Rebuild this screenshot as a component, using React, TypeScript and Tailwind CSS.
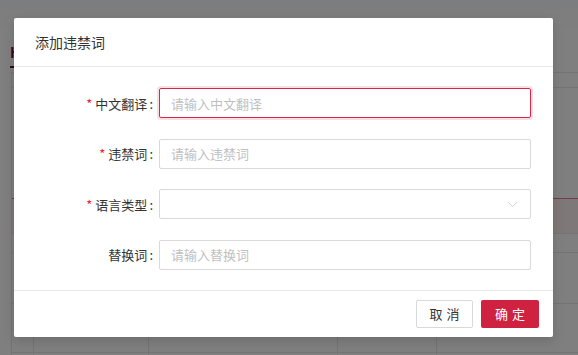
import { ChevronDown } from 'lucide-react'

const font = { fontFamily: '"Noto Sans CJK SC", "Noto Sans", sans-serif' }

const rows = [
  { label: '中文翻译', required: true, placeholder: '请输入中文翻译', focused: true },
  { label: '违禁词', required: true, placeholder: '请输入违禁词' },
  { label: '语言类型', required: true, select: true },
  { label: '替换词', required: false, placeholder: '请输入替换词' },
]

// rows of the table behind the mask
const tableRows = [
  { h: 'h-[15px]' },
  { h: 'h-[111px]' },
  { h: 'h-[35px]', active: true },
  { h: 'h-[19px]' },
  { h: 'h-[51px]' },
  { h: 'h-[49px]' },
  { h: 'h-[20px]' },
]

const App = () => {
  return (
    <div className="relative w-[578px] h-[355px] overflow-hidden bg-white" style={font}>
      {/* page behind the mask */}
      <div className="flex flex-col">
        <div className="h-[9px] bg-[#f8fbfd]" />
        <div className="h-[18px] bg-[#fdfdfd]" />
        <div className="pl-[10px] h-[45px] flex flex-col">
          <div className="pt-[18px] text-[#7a0f2a] text-[14px] leading-none font-bold">H</div>
          <div className="mt-[7px] w-[20px] h-[2px] bg-[#7a0f2a]" />
        </div>
        <div className="ml-[11px] border-l border-[#e8e8e8] flex flex-col">
          {tableRows.map((t, i) => (
            <div
              key={i}
              className={`${t.h} grid grid-cols-[22px_115px_189px_99px_1fr] border-t ${
                t.active ? 'border-[#e27a8f] bg-[#fff0f3]' : 'border-[#e8e8e8]'
              }`}
            >
              <div className="border-r border-[#e8e8e8]" />
              <div className="border-r border-[#e8e8e8]" />
              <div className="border-r border-[#e8e8e8]" />
              <div className="border-r border-[#e8e8e8]" />
              <div />
            </div>
          ))}
        </div>
      </div>

      {/* mask */}
      <div className="absolute inset-0 bg-black/50" />

      {/* modal */}
      <div className="absolute left-[14px] top-[18px] w-[539px] bg-white rounded-[2px] shadow-[0_4px_12px_rgba(0,0,0,0.15)]">
        <div className="h-[49px] px-[21px] flex items-center border-b border-[#e8e8e8]">
          <span className="text-[14px] text-[#333] leading-none">添加违禁词</span>
        </div>

        <div className="pt-[21px] pb-[20px] flex flex-col gap-[20.5px]">
          {rows.map((r) => (
            <div key={r.label} className="flex items-center h-[30px]">
              <div className="w-[139px] flex justify-end items-center text-[13px] text-[#333] leading-none">
                {r.required && <span className="text-[#f5222d] mr-[3px] text-[13px]">*</span>}
                <span>{r.label}</span>
                <span className="ml-[2px]">:</span>
              </div>
              <div
                className={`ml-[6px] mr-[22px] flex-1 h-full flex items-center px-[11px] rounded-[2px] border ${
                  r.focused
                    ? 'border-[#d4294a] shadow-[0_0_0_2px_rgba(212,41,74,0.15)]'
                    : 'border-[#d9d9d9]'
                }`}
              >
                {r.select ? (
                  <div className="flex-1 flex justify-end">
                    <ChevronDown size={17} strokeWidth={1} className="text-[#bfbfbf] -mr-[2px]" />
                  </div>
                ) : (
                  <span className="text-[13px] text-[#bfbfbf] leading-none">{r.placeholder}</span>
                )}
              </div>
            </div>
          ))}
        </div>

        <div className="h-[47px] border-t border-[#e8e8e8] flex items-center justify-end gap-[8px] pr-[14px]">
          <button className="w-[57px] h-[28px] border border-[#d9d9d9] rounded-[2px] bg-white text-[13px] text-[#333] tracking-[4px] pl-[4px]">
            取消
          </button>
          <button className="w-[58px] h-[28px] rounded-[2px] bg-[#cf2140] text-[13px] text-white tracking-[4px] pl-[4px]">
            确定
          </button>
        </div>
      </div>
    </div>
  )
}

export default App
